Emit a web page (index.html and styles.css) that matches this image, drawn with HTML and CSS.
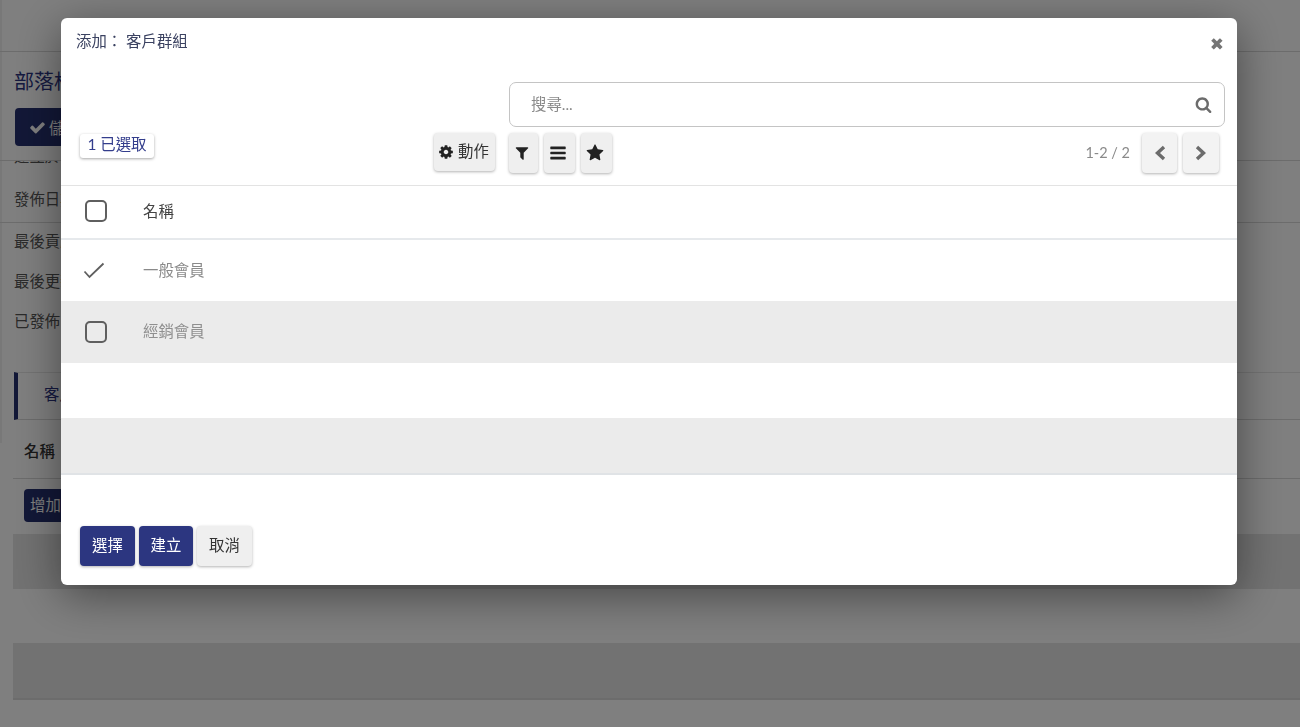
FILE: index.html
```html
<!DOCTYPE html>
<html lang="zh-Hant">
<head>
<meta charset="utf-8">
<title>添加：客戶群組</title>
<link rel="stylesheet" href="styles.css">
</head>
<body>
<div class="page">
  <div class="topbar"></div>
  <div class="sheet">
    <h1 class="page-title">部落格文章</h1>
    <button class="page-save"><svg class="ic" viewBox="0 0 1792 1792"><path d="M1671 566q0 40-28 68l-724 724-136 136q-28 28-68 28t-68-28l-136-136-362-362q-28-28-28-68t28-68l136-136q28-28 68-28t68 28l294 295 656-657q28-28 68-28t68 28l136 136q28 28 28 68z"/></svg>儲存</button>
    <div class="rule rule-a"></div>
    <div class="field-clip"><div class="field-clip-text">建立於</div></div>
    <div class="field field-first">發佈日期</div>
    <div class="rule rule-b"></div>
    <div class="field">最後貢獻者</div>
    <div class="field">最後更新</div>
    <div class="field">已發佈</div>
    <div class="tabs"><span class="tab">客戶群組</span></div>
    <div class="bg-head">名稱</div>
    <div class="bg-add"><button class="bg-add-btn">增加</button></div>
    <div class="stripe dark"></div>
    <div class="stripe light"></div>
    <div class="stripe dark last"></div>
  </div>
</div>
<div class="backdrop"></div>
<div class="modal">
  <header class="modal-head">
    <h4 class="modal-title">添加： 客戶群組</h4>
    <span class="close">✖</span>
  </header>
  <div class="control">
    <div class="selected-col"><span class="selected">1 已選取</span></div>
    <div class="actions-col"><button class="btn tool action"><svg class="ic gear" viewBox="0 0 1792 1792"><path d="M1152 896q0-106-75-181t-181-75-181 75-75 181 75 181 181 75 181-75 75-181zm512-109v222q0 12-8 23t-20 13l-185 28q-19 54-39 91 35 50 107 138 10 12 10 25t-9 23q-27 37-99 108t-94 71q-12 0-26-9l-138-108q-44 23-91 38-16 136-29 186-7 28-36 28h-222q-14 0-24.500-8.500t-11.500-21.500l-28-184q-49-16-90-37l-141 107q-10 9-25 9-14 0-25-11-126-114-165-168-7-10-7-23 0-12 8-23 15-21 51-66.500t54-70.500q-27-50-41-99l-183-27q-13-2-21-12.500t-8-23.500v-222q0-12 8-23t19-13l186-28q14-46 39-92-40-57-107-138-10-12-10-24 0-10 9-23 26-36 98.500-107.500t94.500-71.500q13 0 26 10l138 107q44-23 91-38 16-136 29-186 7-28 36-28h222q14 0 24.500 8.500t11.500 21.500l28 184q49 16 90 37l142-107q9-9 24-9 13 0 25 10 129 119 165 170 7 8 7 22 0 12-8 23-15 21-51 66.500t-54 70.500q26 50 41 98l183 28q13 2 21 12.500t8 23.500z"/></svg><span class="btn-label">動作</span></button></div>
    <div class="right-col">
      <div class="search">
        <span class="search-ph">搜尋...</span>
        <svg class="search-ic" viewBox="0 0 1792 1792"><path d="M1216 832q0-185-131.500-316.500t-316.500-131.500-316.500 131.500-131.500 316.500 131.500 316.500 316.500 131.500 316.500-131.500 131.500-316.500zm512 832q0 52-38 90t-90 38q-54 0-90-38l-343-342q-179 124-399 124-143 0-273.500-55.500t-225-150-150-225-55.500-273.500 55.500-273.500 150-225 225-150 273.500-55.500 273.500 55.500 225 150 150 225 55.500 273.500q0 220-124 399l343 343q37 37 37 90z"/></svg>
      </div>
      <div class="tool-row">
        <div class="tools">
          <button class="btn tool filter"><svg class="ic" viewBox="0 0 1792 1792"><path d="M1595 295q17 41-14 70l-493 493v742q0 42-39 59-13 5-25 5-27 0-45-19l-256-256q-19-19-19-45v-486l-493-493q-31-29-14-70 17-39 59-39h1280q42 0 59 39z"/></svg></button>
          <button class="btn tool group"><svg class="ic" viewBox="0 0 1792 1792"><path d="M1664 1344v128q0 26-19 45t-45 19h-1408q-26 0-45-19t-19-45v-128q0-26 19-45t45-19h1408q26 0 45 19t19 45zm0-512v128q0 26-19 45t-45 19h-1408q-26 0-45-19t-19-45v-128q0-26 19-45t45-19h1408q26 0 45 19t19 45zm0-512v128q0 26-19 45t-45 19h-1408q-26 0-45-19t-19-45v-128q0-26 19-45t45-19h1408q26 0 45 19t19 45z"/></svg></button>
          <button class="btn tool fav"><svg class="ic" viewBox="0 0 1792 1792"><path d="M1728 647q0 22-26 48l-363 354 86 500q1 7 1 20 0 21-10.500 35.500t-30.500 14.500q-19 0-40-12l-449-236-449 236q-22 12-40 12-21 0-31.500-14.500t-10.500-35.500q0-6 2-20l86-500-364-354q-25-27-25-48 0-37 56-46l502-73 225-455q19-41 49-41t49 41l225 455 502 73q56 9 56 46z"/></svg></button>
        </div>
        <div class="pager">
          <span class="pager-text">1-2 / 2</span>
          <button class="btn nav prev"><svg class="chev" viewBox="0 0 14 16"><path d="M11 2 L4.500 8 L11 14"/></svg></button>
          <button class="btn nav next"><svg class="chev" viewBox="0 0 14 16"><path d="M3 2 L9.500 8 L3 14"/></svg></button>
        </div>
      </div>
    </div>
  </div>
  <div class="table">
    <div class="row row-head"><span class="cell-check"><span class="box"></span></span><span class="cell-name head-name">名稱</span></div>
    <div class="row row-one"><span class="cell-check"><svg class="check" viewBox="0 0 22 17"><path d="M1.500 9.500 L6.500 15 L20.500 1.500"/></svg></span><span class="cell-name">一般會員</span></div>
    <div class="row row-two"><span class="cell-check"><span class="box"></span></span><span class="cell-name">經銷會員</span></div>
    <div class="row row-three"></div>
    <div class="row row-four"></div>
  </div>
  <footer class="modal-foot">
    <button class="foot-btn primary select">選擇</button>
    <button class="foot-btn primary create">建立</button>
    <button class="foot-btn cancel">取消</button>
  </footer>
</div>
</body>
</html>
```
FILE: styles.css
```css
* { box-sizing: border-box; }
html, body { margin: 0; padding: 0; height: 100%; overflow: hidden; }
body {
  background: #fff;
  color: #3a3a3a;
  font-family: "Lato", "Noto Sans CJK TC", sans-serif;
  font-size: 15.4px;
}
button { font-family: inherit; cursor: pointer; }
.ic { width: 1em; height: 1em; fill: currentColor; display: block; flex: none; }

/* page behind the dialog */
.page {
  height: 727px; overflow: hidden;
  background: linear-gradient(#f0f0f0, #f0f0f0) no-repeat 0 0 / 2px 443px;
}
.topbar { height: 52px; border-bottom: 1px solid #d8d8d8; }
.sheet { padding-left: 13px; }
.page-title { margin: 0 0 0 1px; padding-top: 16px; height: 56px; font-size: 20px; line-height: 26px; font-weight: 400; color: #2b3380; }
.page-save {
  display: flex; align-items: center; gap: 3px; width: 100px; height: 38px; padding: 0 0 0 14px; margin-left: 2px;
  border: 0; border-radius: 4px; background: #25306f; color: #fff; font-size: 15.4px;
}
.page-save .ic { font-size: 17px; }
.rule { margin-left: -13px; height: 1px; background: #d8d8d8; }
.rule-a { margin-top: 14px; }
.field-clip { height: 6px; overflow: hidden; }
.field-clip-text { margin-top: -16px; line-height: 22px; color: #555; padding-left: 1px; }
.field { height: 40px; line-height: 37px; color: #555; padding-left: 1px; }
.field-first { height: 55px; line-height: 64px; }
.tabs {
  margin: 29px 0 0 1px; height: 48px; padding-left: 26px; line-height: 42px; color: #2b3380;
  border-left: 4px solid #25306f; border-top: 1px solid #e6e6e6; border-bottom: 1px solid #d8d8d8;
}
.bg-head { height: 59px; line-height: 62px; border-bottom: 1px solid #d8d8d8; padding-left: 11px; font-weight: 500; color: #333; }
.bg-add { height: 55px; padding: 10px 0 0 11px; }
.bg-add-btn { display: block; width: 100px; height: 33px; border: 0; border-radius: 4px; background: #25306f; color: #fff; font-size: 15.4px; padding: 0 0 4px 6px; text-align: left; }
.stripe { height: 54px; }
.stripe.dark { height: 55px; background: #e4e4e4; }
.stripe.last { height: 57px; border-bottom: 2px solid #d8d8d8; }

/* overlay */
.backdrop { position: fixed; inset: 0; background: rgba(0, 0, 0, .5); }
.modal {
  position: fixed; left: 61px; top: 18px; width: 1176px; height: 567px;
  background: #fff; border-radius: 6px; box-shadow: 0 10px 45px rgba(0, 0, 0, .45);
  display: flex; flex-direction: column; overflow: hidden;
}
.modal-head { height: 64px; flex: none; display: flex; justify-content: space-between; align-items: flex-start; padding: 13px 13px 0 15px; }
.modal-title { margin: 0; font-size: 15.4px; line-height: 20px; font-weight: 400; color: #3b4261; }
.close { font-size: 17px; line-height: 17px; margin-top: 5px; color: #757575; font-family: "DejaVu Sans", sans-serif; }

.control { height: 103px; flex: none; display: flex; padding-right: 12px; }
.selected-col { width: 373px; flex: none; padding: 52px 0 0 19px; }
.selected {
  display: block; width: 74px; height: 24px; line-height: 21px; text-align: center;
  color: #333d8c; background: #fff; border-radius: 3px; box-shadow: 0 1px 3px rgba(0, 0, 0, .35);
}
.actions-col { width: 74px; flex: none; padding-top: 51px; }
.right-col { flex: 1; min-width: 0; }
.btn { border: 0; background: #efefef; color: #222; border-radius: 4px; box-shadow: 0 1px 3px rgba(0, 0, 0, .3); display: flex; align-items: center; justify-content: center; padding: 0; }
.tool.action { width: 61px; height: 38px; font-size: 15.4px; gap: 4px; color: #333; justify-content: flex-start; padding-left: 4px; }
.btn-label { padding-bottom: 4px; }
.gear { font-size: 16px; color: #222; }
.search { height: 45px; border: 1px solid #c4c4c4; border-radius: 7px; display: flex; align-items: center; justify-content: space-between; padding: 0 12px 0 21px; margin-left: 1px; }
.search-ph { color: #8a8a8a; font-size: 15.4px; padding-bottom: 4px; }
.search-ic { width: 17px; height: 17px; fill: #6c6c6c; }
.tool-row { display: flex; justify-content: space-between; margin-top: 6px; }
.tools { display: flex; gap: 6px; margin-left: 1px; }
.tools .tool { height: 40px; font-size: 16px; padding-right: 3px; }
.tool.filter { width: 29px; }
.tool.group { width: 31px; font-size: 18px; }
.tool.fav { width: 31px; font-size: 18px; }
.pager { display: flex; align-items: flex-start; padding-right: 6px; }
.pager-text { color: #8a8a8a; font-size: 14.500px; line-height: 40px; margin-right: 12px; }
.nav { height: 40px; background: #f3f3f3; }
.nav.prev { width: 35px; margin-right: 6px; }
.nav.next { width: 36px; }
.chev { width: 14px; height: 16px; fill: none; stroke: #6c6c6c; stroke-width: 3.400; }

.table { flex: none; border-top: 1px solid #e3e3e3; }
.row { display: flex; align-items: center; }
.row-head { height: 54px; border-bottom: 2px solid #e6e9ec; padding-bottom: 2px; }
.row-one { height: 61px; }
.row-two { height: 62px; background: #ebebeb; }
.row-three { height: 55px; }
.row-four { height: 57px; background: #ebebeb; border-bottom: 2px solid #e0e3e6; }
.cell-check { width: 82px; flex: none; display: flex; justify-content: center; padding-left: 5px; padding-right: 17px; }
.box { width: 22px; height: 22px; border: 2px solid #5f5f5f; border-radius: 5px; display: block; }
.check { width: 22px; height: 17px; fill: none; stroke: #5f5f5f; stroke-width: 1.800; margin-left: -5px; }
.cell-name { color: #8a8a8a; padding-bottom: 4px; }
.head-name { color: #444; padding-bottom: 2px; }
.row-two .cell-name { color: #8f8f8f; }

.modal-foot { flex: 1; display: flex; align-items: flex-start; gap: 4px; padding: 51px 0 0 19px; }
.foot-btn { height: 40px; border: 0; border-radius: 4px; font-size: 15.4px; box-shadow: 0 1px 3px rgba(0, 0, 0, .3); padding: 0 0 4px; }
.primary { background: #2c3680; color: #fff; }
.select { width: 55px; }
.create { width: 54px; }
.cancel { width: 55px; background: #efefef; color: #333; }
```
